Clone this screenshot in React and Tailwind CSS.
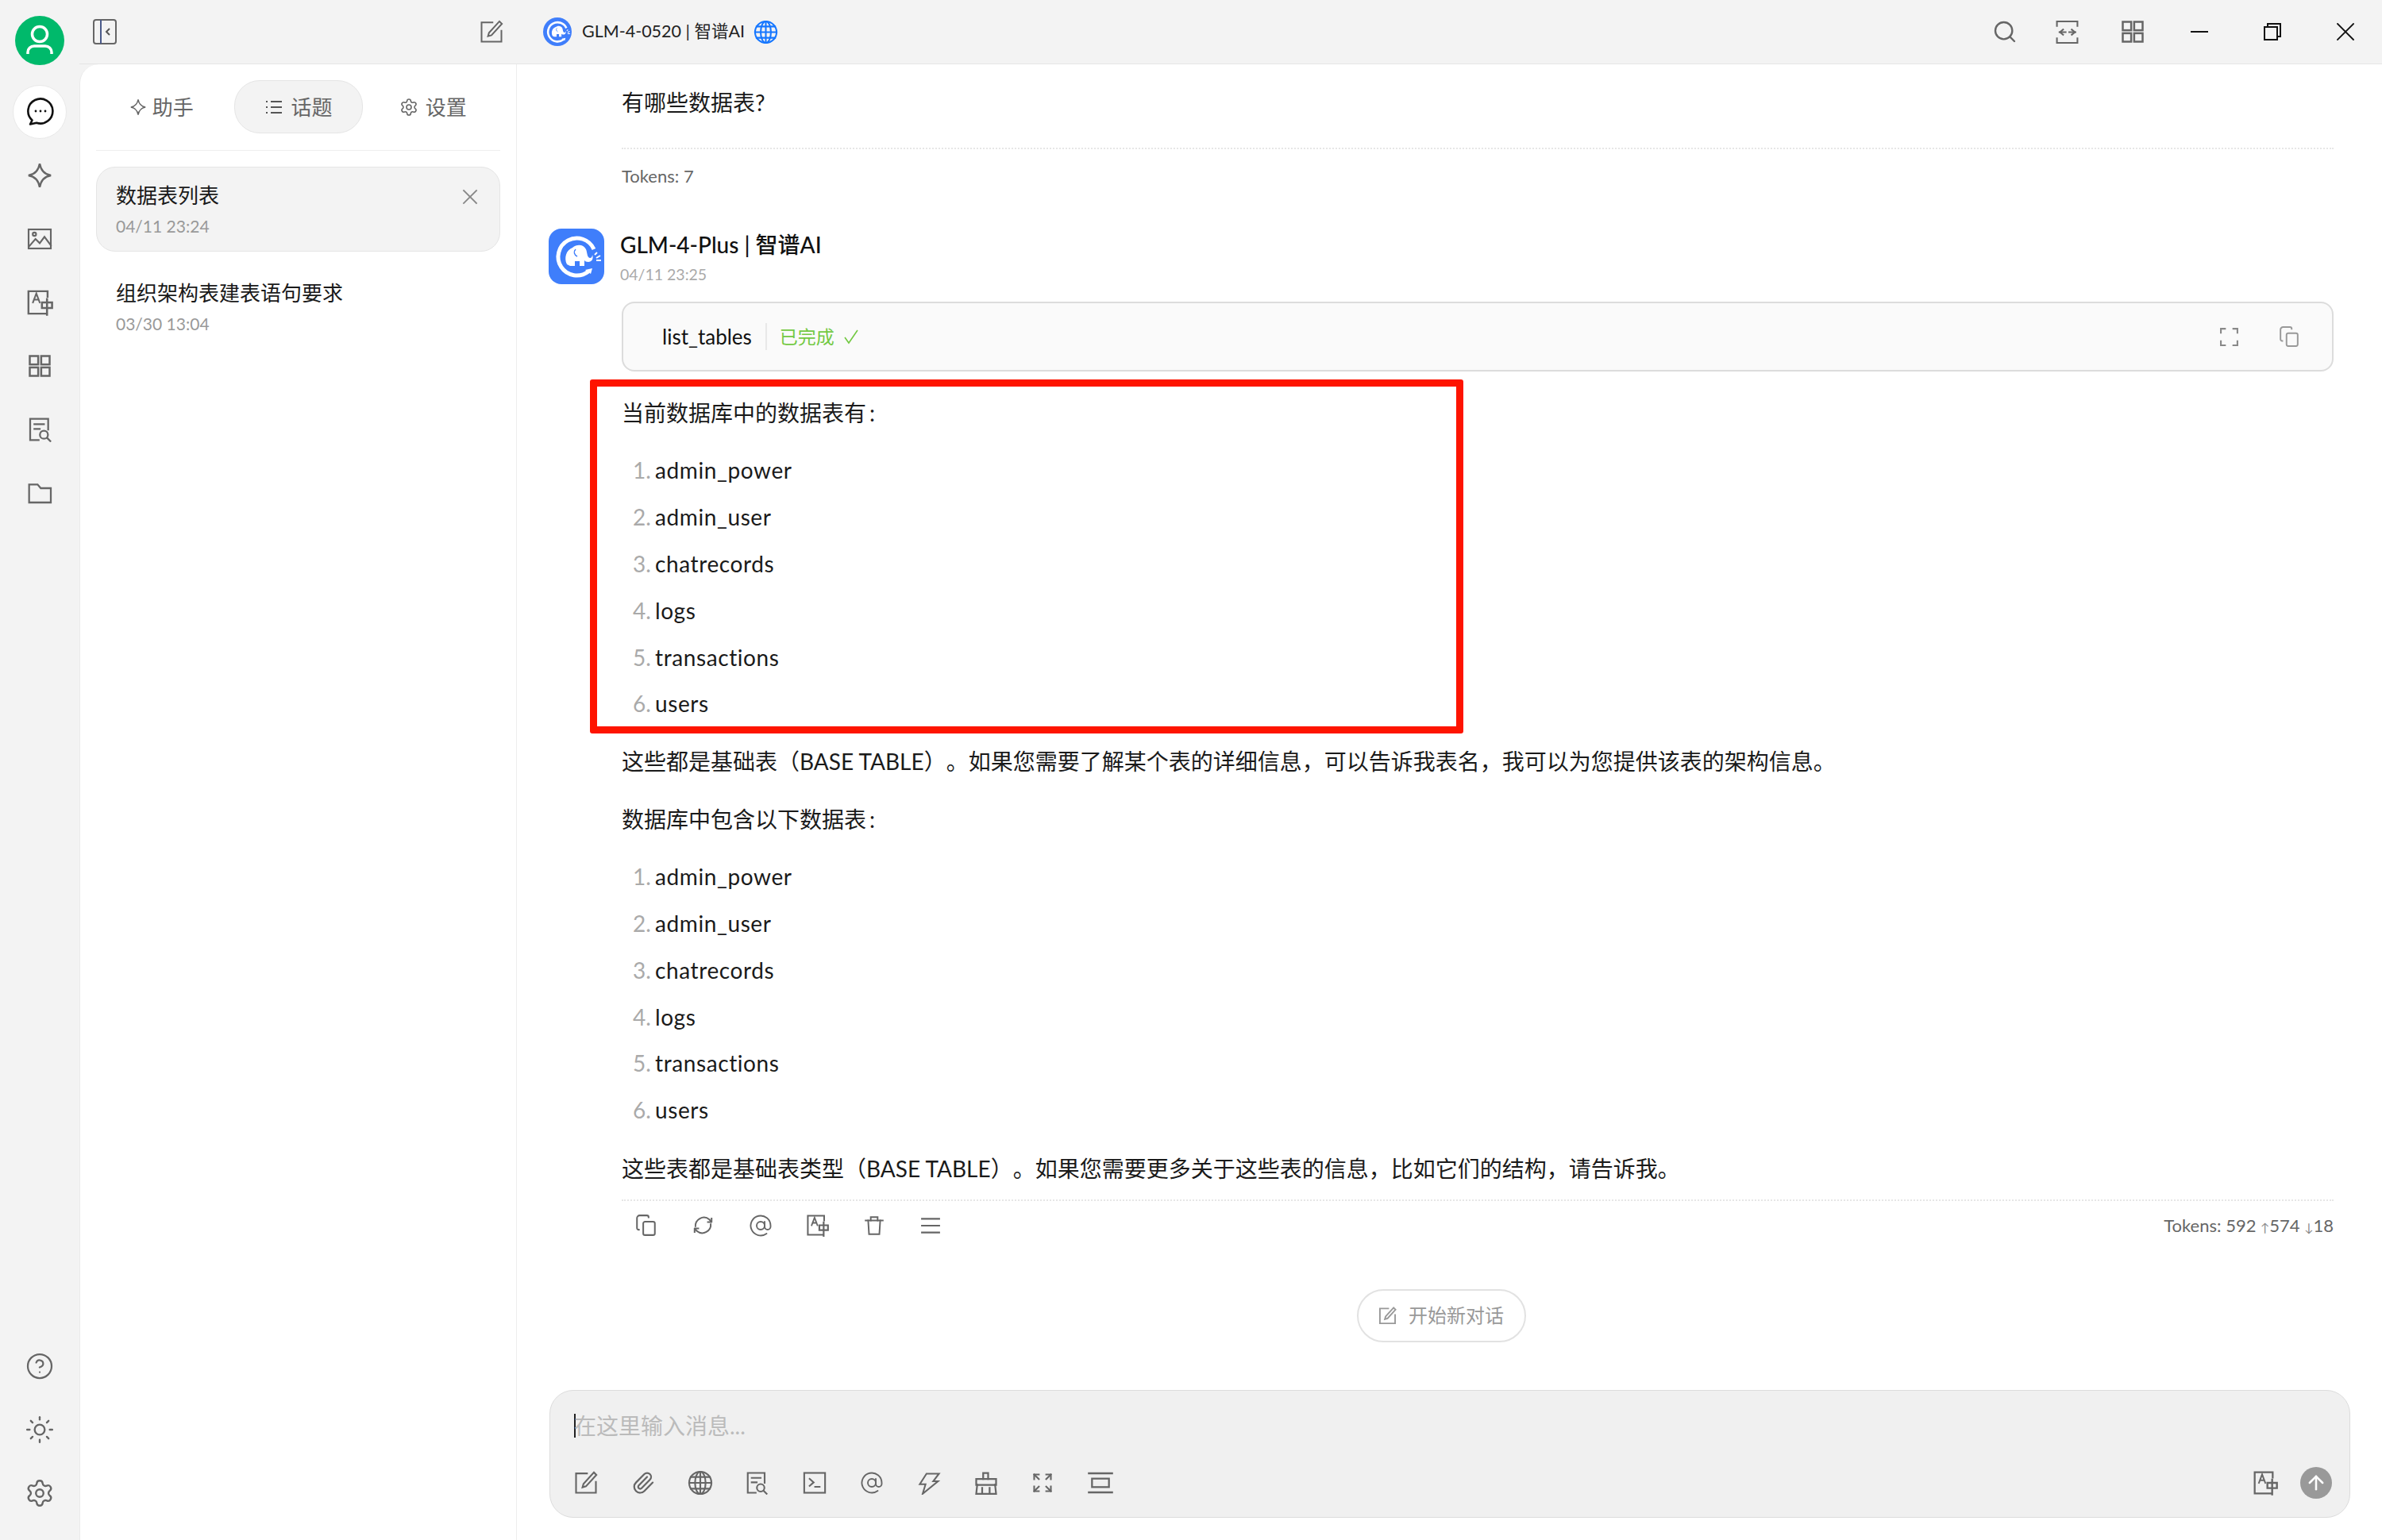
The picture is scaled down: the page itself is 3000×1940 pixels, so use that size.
import React from "react";
import { Search, CircleHelp, Sun, Settings, AtSign, Paperclip, ArrowUp } from "lucide-react";

const S = ({ size = 30, sw = 2, color = "#666", w, h, vb = "0 0 24 24", className = "", children }) => (
  <svg width={w || size} height={h || size} viewBox={vb} fill="none" stroke={color} strokeWidth={sw} strokeLinecap="square" strokeLinejoin="miter" className={"shrink-0 " + className}>
    {children}
  </svg>
);

const IEdit = (p) => (
  <S {...p}>
    <path d="M13 2.5H2V22h20V11" />
    <path d="M20 1.5l2.5 2.5L12 15.5l-3.5 1 1-3.5z" />
  </S>
);
const IStar = (p) => (
  <S {...p}><path d="M12 1.5C13 7.5 16 11 22 12 16 13 13 16.5 12 22.5 11 16.5 8 13 2 12 8 11 11 7.5 12 1.5Z" /></S>
);
const IImage = (p) => (
  <S {...p}>
    <rect x="1.5" y="3" width="21" height="18" />
    <circle cx="7" cy="7.5" r="1.6" />
    <path d="M2 19l6-7 4 4 4.5-6 6 8" />
  </S>
);
const ITrans = (p) => (
  <S {...p}>
    <path d="M19 7V2H2v20h16" />
    <path d="M6 12L9 4l3 8M7 9.5h4" strokeWidth="1.5" />
    <path d="M14 12h9v5h-9zM18.500 9v14" strokeWidth="1.800" />
  </S>
);
const IGrid = (p) => (
  <S {...p}>
    <rect x="2" y="2" width="8.500" height="8.500" />
    <rect x="13.500" y="2" width="8.500" height="8.500" />
    <rect x="2" y="13.500" width="8.500" height="8.500" />
    <rect x="13.500" y="13.500" width="8.500" height="8.500" />
  </S>
);
const IDoc = (p) => (
  <S {...p}>
    <path d="M20 12V2H3v20h8" />
    <path d="M7 7h9M7 11.500h5" />
    <circle cx="16" cy="17" r="3.800" />
    <path d="M19 20l3 3" />
  </S>
);
const IFolder = (p) => (
  <S {...p}><path d="M2 4h8l3 3.500h9.500V21H2z" /></S>
);
const ICopy = (p) => (
  <S {...p}>
    <rect x="9" y="8" width="13" height="15" rx="2" />
    <path d="M5 17H4a2 2 0 0 1-2-2V4a3 3 0 0 1 3-3h8a2 2 0 0 1 2 2v1" strokeLinecap="butt" />
  </S>
);
const IRefresh = (p) => (
  <S {...p}>
    <path d="M3.500 14A9.500 9.500 0 0 1 19 5.500L21 8" strokeLinecap="butt" />
    <path d="M20.500 10A9.500 9.500 0 0 1 5 18.500L3 16" strokeLinecap="butt" />
    <path d="M21.500 3.500V8.500H16.500" strokeLinejoin="round" strokeLinecap="butt" />
    <path d="M2.500 20.500V15.500H7.500" strokeLinejoin="round" strokeLinecap="butt" />
  </S>
);
const ITrash = (p) => (
  <S {...p}>
    <path d="M2 6h20" />
    <path d="M8 6V2h8v4" />
    <path d="M5 6l1 16h12l1-16" />
  </S>
);
const IMenu = (p) => (
  <S {...p}><path d="M2 4h20M2 12h20M2 20h20" /></S>
);
const IGlobe = (p) => (
  <S {...p} strokeLinecap="butt">
    <circle cx="12" cy="12" r="10.500" />
    <ellipse cx="12" cy="12" rx="5" ry="10.500" />
    <path d="M12 1.500v21M1.500 12h21M3 6.500h18M3 17.500h18" />
  </S>
);
const ITerm = (p) => (
  <S {...p}>
    <rect x="1.500" y="2" width="21" height="20" />
    <path d="M7 8l4 3.500-4 3.500M12.500 16h4.500" />
  </S>
);
const IBolt = (p) => (
  <S {...p}><path d="M9 2h13l-6 8h5L5 23l3-10H2z" /></S>
);
const IBrush = (p) => (
  <S {...p}>
    <path d="M9 8V2h5v6" />
    <path d="M2 8h20v6H2z" />
    <path d="M3 14l-1 9h20l-1-9M8 17v6M15.500 17v6" />
  </S>
);
const IArrows = (p) => (
  <S {...p} strokeLinecap="butt">
    <path d="M3 3l5 5M16 8l5-5M3 21l5-5M16 16l5 5" />
    <path d="M3 8V3h5M16 3h5v5M8 21H3v-5M21 16v5h-5" />
  </S>
);
const IPanel = (p) => (
  <S {...p} strokeLinecap="butt">
    <path d="M1 3h22M1 21h22" />
    <rect x="4" y="8" width="16" height="8" />
  </S>
);
const IExpand = (p) => (
  <S {...p} strokeLinecap="butt">
    <path d="M2 7V2h5M17 2h5v5M22 17v5h-5M7 22H2v-5" />
  </S>
);
const ISplit = (p) => (
  <S {...p} strokeLinecap="butt" className="">
    <path d="M2 6V1.500h20V6M2 18v4.500h20V18" />
    <path d="M4.500 12h6M14 12h6" />
    <path d="M8 9.500L5 12l3 2.500M16.500 9.500l3 2.500-3 2.500" />
  </S>
);

const Logo = ({ size = 70, round = false }) => (
  <svg width={size} height={size} viewBox="0 0 70 70" className={"shrink-0 " + (round ? "rounded-full" : "rounded-[16px]")}>
    <rect width="70" height="70" fill="#3f7efb" />
    <path d="M57 26A23.500 23.500 0 1 0 50 54" fill="none" stroke="#fff" strokeWidth="5" />
    <path d="M46 52l9-2-2 7z" fill="#fff" />
    <path d="M23 45C19 37 22 27 30 24 36 19 44 20 47 26 49 31 48 36 52 37 54 37 55 35 55 33 57 38 54 42 50 42 47 42 46 41 45 40L45 47 39 47 39 41 33 41 33 47 27 47Z" fill="#fff" />
    <path d="M34 26c-3 3-2 7 2 9" fill="none" stroke="#3f7efb" strokeWidth="1.500" />
    <path d="M58 33l3-3M60 37l5-3M60 40l6 0" stroke="#fff" strokeWidth="2" />
  </svg>
);

const RailBtn = ({ active, children }) => (
  <div className={"w-[68px] h-[68px] rounded-full flex items-center justify-center " + (active ? "bg-white border border-[#e9e9e9]" : "")}>
    {children}
  </div>
);

const Tab = ({ active, icon, label, gap }) => (
  <div className="flex-1 flex justify-center">
    <div className={"w-[162px] h-[67px] rounded-[32px] flex items-center justify-center text-[26px] text-[#666] " + gap + " " + (active ? "bg-[#f3f3f3] border border-[#e5e5e5]" : "")}>
      {icon}
      <span className="pt-[2px]">{label}</span>
    </div>
  </div>
);

const Topic = ({ title, date, active }) => (
  <div className={"relative h-[107px] rounded-[24px] pl-[24px] pt-[17px] " + (active ? "bg-[#f3f3f3] border border-[#e5e5e5]" : "border border-transparent")}>
    <div className="text-[26px] leading-[36px] text-[#1a1a1a]">{title}</div>
    <div className="mt-[6px] text-[21px] leading-[30px] text-[#999]">{date}</div>
    {active && (
      <div className="absolute right-[27px] top-[27px]">
        <S size={20} color="#888" sw={1.800} vb="0 0 20 20"><path d="M2 2l16 16M18 2L2 18" /></S>
      </div>
    )}
  </div>
);

const OL = ({ items }) => (
  <div>
    {items.map((t, i) => (
      <div key={t} className="flex h-[58.800px] items-center text-[28px] text-[#1a1a1a]">
        <span className="w-[42px] pl-[14px] text-[#aaa]">{i + 1}.</span>
        <span className="tracking-[0.6px]">{t}</span>
      </div>
    ))}
  </div>
);

const P = ({ className = "", children }) => (
  <div className={"h-[58px] flex items-center text-[28px] text-[#1a1a1a] whitespace-pre " + className}>{children}</div>
);

const items = ["admin_power", "admin_user", "chatrecords", "logs", "transactions", "users"];

export default function App() {
  return (
    <div className="flex w-[3000px] h-[1940px] overflow-hidden bg-[#f3f3f3] [font-family:Lato,'Noto_Sans_CJK_SC',sans-serif] [text-spacing-trim:space-all]">
      {/* rail */}
      <div className="w-[100px] shrink-0 flex flex-col items-center pt-[20px] pb-[25px]">
        <div className="w-[62px] h-[62px] rounded-full bg-[#00b96b] flex items-center justify-center">
          <svg width="62" height="62" viewBox="0 0 62 62" fill="none" stroke="#fff" strokeWidth="3.500">
            <circle cx="31" cy="23" r="9.500" />
            <path d="M16 48v-2a8 8 0 0 1 8-8h14a8 8 0 0 1 8 8v2" />
          </svg>
        </div>
        <div className="mt-[25px] flex flex-col items-center gap-[12px]">
          <RailBtn active>
            <svg width="36" height="36" viewBox="0 0 36 36" fill="none" stroke="#111" strokeWidth="2.600">
              <path d="M6 33.500L8.500 28.500A15.500 15.500 0 1 1 14 31.700Z" strokeLinejoin="round" />
              <circle cx="13" cy="17" r="1.400" fill="#111" stroke="none" />
              <circle cx="19" cy="17" r="1.400" fill="#111" stroke="none" />
              <circle cx="25" cy="17" r="1.400" fill="#111" stroke="none" />
            </svg>
          </RailBtn>
          <RailBtn><IStar size={34} sw={1.700} /></RailBtn>
          <RailBtn><IImage size={32} sw={1.600} /></RailBtn>
          <RailBtn><ITrans size={34} sw={1.700} /></RailBtn>
          <RailBtn><IGrid size={30} sw={2} /></RailBtn>
          <RailBtn><IDoc size={32} sw={1.700} /></RailBtn>
          <RailBtn><IFolder size={32} sw={1.700} /></RailBtn>
        </div>
        <div className="mt-auto flex flex-col items-center gap-[12px]">
          <RailBtn><CircleHelp size={36} color="#666" strokeWidth={1.500} /></RailBtn>
          <RailBtn><Sun size={38} color="#666" strokeWidth={1.500} /></RailBtn>
          <RailBtn><Settings size={38} color="#666" strokeWidth={1.500} /></RailBtn>
        </div>
      </div>

      <div className="flex-1 flex flex-col min-w-0">
        {/* title bar */}
        <div className="h-[81px] shrink-0 flex items-center border-b border-[#e5e5e5]">
          <div className="w-[550px] shrink-0 flex items-center justify-between pl-[17px] pr-[16px]">
            <svg width="30" height="32" viewBox="0 0 30 32" fill="none">
              <rect x="1" y="1" width="28" height="30" rx="3" stroke="#666" strokeWidth="2" />
              <path d="M10 1v30" stroke="#4a5a8a" strokeWidth="2" />
              <path d="M21 12l-4 4 4 4" stroke="#555" strokeWidth="2" />
            </svg>
            <IEdit size={30} sw={1.600} />
          </div>
          <div className="ml-[34px] flex items-center">
            <Logo size={36} round />
            <span className="ml-[13px] text-[21.500px] text-[#222] leading-none">GLM-4-0520 | 智谱AI</span>
            <IGlobe size={31} sw={1.600} color="#1677ff" className="ml-[11px]" />
          </div>
          <div className="ml-auto flex items-center">
            <Search size={32} color="#666" strokeWidth={1.800} />
            <div className="ml-[47px]"><ISplit size={31} sw={1.600} /></div>
            <div className="ml-[52px] mr-[23px]"><IGrid size={30} sw={2} /></div>
            <div className="w-[92px] flex justify-center"><S w={22} h={2} vb="0 0 22 2" color="#111" sw={2}><path d="M0 1h22" strokeLinecap="butt" /></S></div>
            <div className="w-[92px] flex justify-center">
              <S size={22} vb="0 0 22 22" color="#111" sw={2}><rect x="1" y="5" width="16" height="16" /><path d="M5 5V1h16v16h-4" /></S>
            </div>
            <div className="w-[92px] flex justify-center">
              <S size={22} vb="0 0 22 22" color="#111" sw={1.800}><path d="M1 1l20 20M21 1L1 21" /></S>
            </div>
          </div>
        </div>

        <div className="flex-1 flex min-h-0">
          {/* sidebar */}
          <div className="w-[550px] shrink-0 bg-white rounded-tl-[24px] border-l border-[#eaeaea] pl-[20px] pr-[20px] pt-[20px]">
            <div className="flex">
              <Tab gap="gap-[7px] pr-[5px]" icon={<IStar size={22} sw={1.600} />} label="助手" />
              <Tab
                active
                gap="gap-[10px] pl-[2px]"
                icon={
                  <S size={22} sw={2} vb="0 0 22 22" color="#555">
                    <path d="M7 4h14M7 11h14M7 18h14" strokeLinecap="butt" />
                    <path d="M1 4h2M1 11h2M1 18h2" strokeLinecap="butt" />
                  </S>
                }
                label="话题"
              />
              <Tab gap="gap-[9px]" icon={<Settings size={24} color="#666" strokeWidth={1.600} />} label="设置" />
            </div>
            <div className="mt-[21px] h-px bg-[#eeeeee]" />
            <div className="mt-[20px] flex flex-col gap-[16px]">
              <Topic active title="数据表列表" date="04/11 23:24" />
              <Topic title="组织架构表建表语句要求" date="03/30 13:04" />
            </div>
          </div>

          {/* main */}
          <div className="relative flex-1 min-w-0 bg-white border-l border-[#eeeeee] flex flex-col pt-[19px]">
            <div className="absolute left-[92px] top-[397px] w-[1100px] h-[446px] border-[9px] border-[#fe1400] rounded-[3px]" />

            <div className="pl-[132px] pr-[61px]">
              <P>有哪些数据表?</P>
              <div className="mt-[28px] border-t-2 border-dotted border-[#e6e6e6]" />
              <div className="mt-[18px] h-[30px] flex items-center text-[22px] text-[#666]">Tokens: 7</div>
            </div>

            <div className="mt-[52px] pl-[40px] pr-[61px]">
              <div className="flex h-[70px]">
                <Logo />
                <div className="ml-[20px] pt-px">
                  <div className="h-[38px] flex items-center text-[28px] font-medium text-[#111] leading-none">GLM-4-Plus | 智谱AI</div>
                  <div className="mt-[4px] h-[30px] flex items-center text-[19.500px] text-[#aaa]">04/11 23:25</div>
                </div>
              </div>

              <div className="ml-[92px]">
                <div className="mt-[22px] h-[88px] flex items-center rounded-[16px] border-2 border-[#dcdcdc] bg-[#fafafa] pl-[49px] pr-[41px]">
                  <span className="text-[26px] text-[#111]">list_tables</span>
                  <span className="ml-[17px] w-[2px] h-[34px] bg-[#e8e8e8]" />
                  <span className="ml-[16px] text-[23px] text-[#73c943]">已完成</span>
                  <S size={20} vb="0 0 20 20" color="#73c943" sw={1.600} className="ml-[11px]"><path d="M2 11l5 7L18 2" strokeLinecap="butt" /></S>
                  <div className="ml-auto flex items-center gap-[50px]">
                    <IExpand size={25} sw={2} color="#888" />
                    <ICopy size={26} sw={1.800} color="#999" />
                  </div>
                </div>

                <P className="mt-[23px]">当前数据库中的数据表有<span className="ml-[4px]">:</span></P>
                <div className="mt-[14px]"><OL items={items} /></div>
                <P className="mt-[14px]">这些都是基础表（BASE TABLE）。如果您需要了解某个表的详细信息，可以告诉我表名，我可以为您提供该表的架构信息。</P>
                <P className="mt-[15px]">数据库中包含以下数据表<span className="ml-[4px]">:</span></P>
                <div className="mt-[14px]"><OL items={items} /></div>
                <P className="mt-[15px]">这些表都是基础表类型（BASE TABLE）。如果您需要更多关于这些表的信息，比如它们的结构，请告诉我。</P>
                <div className="mt-[10px] border-t-2 border-dotted border-[#e6e6e6]" />
                <div className="mt-[11px] h-[40px] flex items-center pl-[17px]">
                  <div className="flex items-center gap-[45px]">
                    <ICopy size={27} sw={1.800} />
                    <IRefresh size={27} sw={1.800} />
                    <AtSign size={30} color="#666" strokeWidth={1.500} className="-ml-[1px]" />
                    <ITrans size={29} sw={1.700} className="-ml-[3px]" />
                    <ITrash size={26} sw={1.800} className="-ml-[1px]" />
                    <IMenu size={26} sw={2} />
                  </div>
                  <span className="ml-auto text-[22px] text-[#666]">Tokens: 592 <span className="text-[15px] text-[#888]">↑</span>574 <span className="text-[15px] text-[#888]">↓</span>18</span>
                </div>
              </div>

              <div className="mt-[60px] flex justify-center">
                <div className="h-[67px] w-[213px] rounded-full border-2 border-[#e2e2e2] flex items-center justify-center gap-[15px] text-[24px] text-[#999]">
                  <IEdit size={23} sw={2} color="#999" />
                  <span>开始新对话</span>
                </div>
              </div>
            </div>

            {/* input */}
            <div className="mt-auto mb-[28px] ml-[41px] mr-[40px] h-[161px] shrink-0 rounded-[30px] bg-[#f0f0f0] border border-[#dcdcdc] pl-[30px] pr-[22px] pt-[27px]">
              <div className="h-[34px] flex items-center text-[28px] text-[#bbb]">
                <span className="w-[2px] h-[30px] -mr-[2px] bg-[#222]" />
                <span>在这里输入消息...</span>
              </div>
              <div className="mt-[34px] h-[42px] flex items-center">
                <div className="flex items-center">
                  <div className="w-[30px] flex justify-center mr-[42px]"><IEdit size={30} sw={1.700} /></div>
                  <div className="w-[30px] flex justify-center mr-[42px]"><Paperclip size={30} color="#666" strokeWidth={1.800} /></div>
                  <div className="w-[30px] flex justify-center mr-[41px]"><IGlobe size={32} sw={1.600} /></div>
                  <div className="w-[30px] flex justify-center mr-[43px]"><IDoc size={30} sw={1.700} /></div>
                  <div className="w-[30px] flex justify-center mr-[42px]"><ITerm size={30} sw={1.700} /></div>
                  <div className="w-[30px] flex justify-center mr-[42px]"><AtSign size={32} color="#666" strokeWidth={1.500} /></div>
                  <div className="w-[30px] flex justify-center mr-[42px]"><IBolt size={29} sw={1.700} /></div>
                  <div className="w-[30px] flex justify-center mr-[41px]"><IBrush size={30} sw={1.800} /></div>
                  <div className="w-[30px] flex justify-center mr-[43px]"><IArrows size={28} sw={1.800} /></div>
                  <div className="w-[30px] flex justify-center"><IPanel size={32} sw={1.700} /></div>
                </div>
                <div className="ml-auto flex items-center gap-[28px]">
                  <ITrans size={32} sw={1.700} />
                  <div className="w-[40px] h-[40px] rounded-full bg-[#999] flex items-center justify-center">
                    <ArrowUp size={28} color="#fff" strokeWidth={2.200} />
                  </div>
                </div>
              </div>
            </div>
          </div>
        </div>
      </div>
    </div>
  );
}
